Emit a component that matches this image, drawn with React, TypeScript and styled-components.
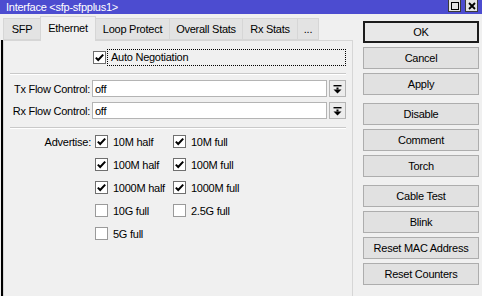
import React from "react";
import styled, { createGlobalStyle } from "styled-components";

const GlobalStyle = createGlobalStyle`
  html, body {
    margin: 0;
    padding: 0;
    background: #f0f0f0;
  }
  * {
    box-sizing: border-box;
  }
`;

const Window = styled.div`
  width: 482px;
  height: 296px;
  overflow: hidden;
  background: #f0f0f0;
  font-family: "Liberation Sans", Arial, sans-serif;
  font-size: 11px;
  letter-spacing: -0.25px;
  color: #000;
  display: flex;
  flex-direction: column;
`;

const TitleBar = styled.div`
  height: 14px;
  flex: none;
  background: #4c4cd0;
  color: #fff;
  display: flex;
  align-items: center;
  padding-left: 6px;
  line-height: 14px;
`;

const TitleText = styled.span`
  flex: 1;
`;

const WinControls = styled.div`
  display: flex;
  align-items: flex-start;
  gap: 4px;
  height: 14px;
  padding-right: 4px;
`;

const WinButton = styled.div`
  width: 13px;
  height: 12px;
  background: #e4e4e4;
  border: 1px solid #3a3a3a;
  border-top: none;
  display: flex;
  align-items: center;
  justify-content: center;
`;

const Body = styled.div`
  flex: 1;
  display: flex;
  min-height: 0;
`;

const LeftColumn = styled.div`
  width: 353px;
  flex: none;
  display: flex;
  flex-direction: column;
`;

const TabStrip = styled.div`
  height: 26px;
  flex: none;
  display: flex;
  align-items: flex-end;
  padding-left: 3px;
  position: relative;
  z-index: 1;
`;

const Tab = styled.div<{ $w: number; $active?: boolean }>`
  width: ${(p) => p.$w}px;
  height: ${(p) => (p.$active ? 25 : 22)}px;
  margin-bottom: ${(p) => (p.$active ? -1 : 0)}px;
  background: ${(p) => (p.$active ? "#f0f0f0" : "#e3e3e3")};
  border: 1px solid #d6d6d6;
  border-bottom: ${(p) => (p.$active ? "none" : "1px solid #d6d6d6")};
  margin-right: -1px;
  display: flex;
  align-items: center;
  justify-content: center;
  padding-bottom: ${(p) => (p.$active ? 3 : 0)}px;
  flex: none;
`;

const PanelRow = styled.div`
  flex: 1;
  margin-left: 1px;
  border-left: 2px solid #000;
  display: flex;
`;

const Panel = styled.div`
  flex: 1;
  border: 1px solid #d6d6d6;
  border-bottom: none;
  padding: 0 6px 0 0;
  display: flex;
  flex-direction: column;
`;

const FormRow = styled.div<{ $top: number }>`
  display: grid;
  grid-template-columns: 88px 1fr;
  align-items: center;
  height: 17px;
  margin-top: ${(p) => p.$top}px;
`;

const FieldLabel = styled.div`
  text-align: right;
  padding-right: 2px;
  white-space: nowrap;
`;

const CheckLine = styled.div`
  display: flex;
  align-items: center;
  height: 18px;
  padding-left: 1px;
`;

const FocusLabel = styled.div`
  flex: 1;
  height: 17px;
  margin-left: 1px;
  border: 1px dotted #000;
  display: flex;
  align-items: center;
  padding-left: 3px;
`;

const Separator = styled.div<{ $top: number }>`
  height: 2px;
  margin: ${(p) => p.$top}px 0 0 6px;
  border-top: 1px solid #c9c9c9;
  border-bottom: 1px solid #fff;
`;

const SelectWrap = styled.div`
  display: flex;
  gap: 2px;
  height: 17px;
`;

const Input = styled.div`
  flex: 1;
  background: #fff;
  border: 1px solid #b4b4b4;
  padding-left: 2px;
  display: flex;
  align-items: center;
`;

const DropButton = styled.div`
  width: 17px;
  flex: none;
  background: #ececec;
  border: 1px solid #b4b4b4;
  display: flex;
  align-items: center;
  justify-content: center;
`;

const AdvGrid = styled.div`
  display: grid;
  grid-template-columns: 91px 78px 1fr;
  grid-auto-rows: 23px;
  align-items: center;
  margin-top: 1px;
`;

const AdvLabel = styled.div`
  text-align: right;
  padding-right: 4px;
`;

const CheckItem = styled.div`
  display: flex;
  align-items: center;
  gap: 5px;
  white-space: nowrap;
`;

const Box = styled.div<{ $checked?: boolean }>`
  width: 13px;
  height: 13px;
  flex: none;
  background: #fff;
  border: 1px solid ${(p) => (p.$checked ? "#6f6f6f" : "#9a9a9a")};
  display: flex;
  align-items: center;
  justify-content: center;
`;

const ButtonColumn = styled.div`
  flex: 1;
  padding: 7px 3px 0 10px;
  display: flex;
  flex-direction: column;
`;

const ButtonGroup = styled.div<{ $top: number }>`
  display: flex;
  flex-direction: column;
  gap: 4px;
  margin-top: ${(p) => p.$top}px;
`;

const Button = styled.div<{ $default?: boolean }>`
  height: 22px;
  background: ${(p) => (p.$default ? "#e8e8e8" : "#e1e1e1")};
  border: ${(p) => (p.$default ? "2px solid #1c1c1c" : "1px solid #adadad")};
  display: flex;
  align-items: center;
  justify-content: center;
  white-space: nowrap;
`;

const Check = () => (
  <svg width="11" height="11" viewBox="0 0 11 11">
    <path d="M1.8 5.6 L4.2 8 L9.2 2.6" fill="none" stroke="#000" strokeWidth="2" />
  </svg>
);

const CheckBox = ({ checked, label }: { checked?: boolean; label: string }) => (
  <CheckItem>
    <Box $checked={checked}>{checked && <Check />}</Box>
    {label}
  </CheckItem>
);

const DropIcon = () => (
  <svg width="9" height="10" viewBox="0 0 9 10">
    <rect x="0.5" y="1" width="8" height="1.4" fill="#000" />
    <rect x="3.5" y="3.5" width="2" height="2" fill="#000" />
    <path d="M0.5 5.5 H8.5 L4.5 9.5 Z" fill="#000" />
  </svg>
);

const Select = ({ value }: { value: string }) => (
  <SelectWrap>
    <Input>{value}</Input>
    <DropButton>
      <DropIcon />
    </DropButton>
  </SelectWrap>
);

const tabs = [
  { name: "SFP", w: 38 },
  { name: "Ethernet", w: 56 },
  { name: "Loop Protect", w: 75 },
  { name: "Overall Stats", w: 74 },
  { name: "Rx Stats", w: 56 },
  { name: "...", w: 22 },
];

const buttonGroups = [
  ["OK", "Cancel", "Apply"],
  ["Disable", "Comment", "Torch"],
  ["Cable Test", "Blink", "Reset MAC Address", "Reset Counters"],
];

const App: React.FC = () => {
  return (
    <>
      <GlobalStyle />
      <Window>
        <TitleBar>
          <TitleText>Interface &lt;sfp-sfpplus1&gt;</TitleText>
          <WinControls>
            <WinButton>
              <svg width="8" height="8" viewBox="0 0 8 8">
                <rect x="0.5" y="0.5" width="7" height="7" fill="none" stroke="#000" />
              </svg>
            </WinButton>
            <WinButton>
              <svg width="8" height="8" viewBox="0 0 8 8">
                <path d="M1 1 L7 7 M7 1 L1 7" stroke="#000" strokeWidth="1.8" />
              </svg>
            </WinButton>
          </WinControls>
        </TitleBar>

        <Body>
          <LeftColumn>
            <TabStrip>
              {tabs.map((t) => (
                <Tab key={t.name} $w={t.w} $active={t.name === "Ethernet"}>
                  {t.name}
                </Tab>
              ))}
            </TabStrip>

            <PanelRow>
              <Panel>
                <FormRow $top={7} style={{ height: 18 }}>
                  <div />
                  <CheckLine>
                    <Box $checked>
                      <Check />
                    </Box>
                    <FocusLabel>Auto Negotiation</FocusLabel>
                  </CheckLine>
                </FormRow>

                <Separator $top={7} />

                <FormRow $top={5}>
                  <FieldLabel>Tx Flow Control:</FieldLabel>
                  <Select value="off" />
                </FormRow>
                <FormRow $top={5}>
                  <FieldLabel>Rx Flow Control:</FieldLabel>
                  <Select value="off" />
                </FormRow>

                <Separator $top={8} />

                <AdvGrid>
                  <AdvLabel>Advertise:</AdvLabel>
                  <CheckBox checked label="10M half" />
                  <CheckBox checked label="10M full" />
                  <div />
                  <CheckBox checked label="100M half" />
                  <CheckBox checked label="100M full" />
                  <div />
                  <CheckBox checked label="1000M half" />
                  <CheckBox checked label="1000M full" />
                  <div />
                  <CheckBox label="10G full" />
                  <CheckBox label="2.5G full" />
                  <div />
                  <CheckBox label="5G full" />
                </AdvGrid>
              </Panel>
            </PanelRow>
          </LeftColumn>

          <ButtonColumn>
            {buttonGroups.map((group, i) => (
              <ButtonGroup key={i} $top={i === 0 ? 0 : 8}>
                {group.map((b) => (
                  <Button key={b} $default={b === "OK"}>
                    {b}
                  </Button>
                ))}
              </ButtonGroup>
            ))}
          </ButtonColumn>
        </Body>
      </Window>
    </>
  );
};

export default App;
